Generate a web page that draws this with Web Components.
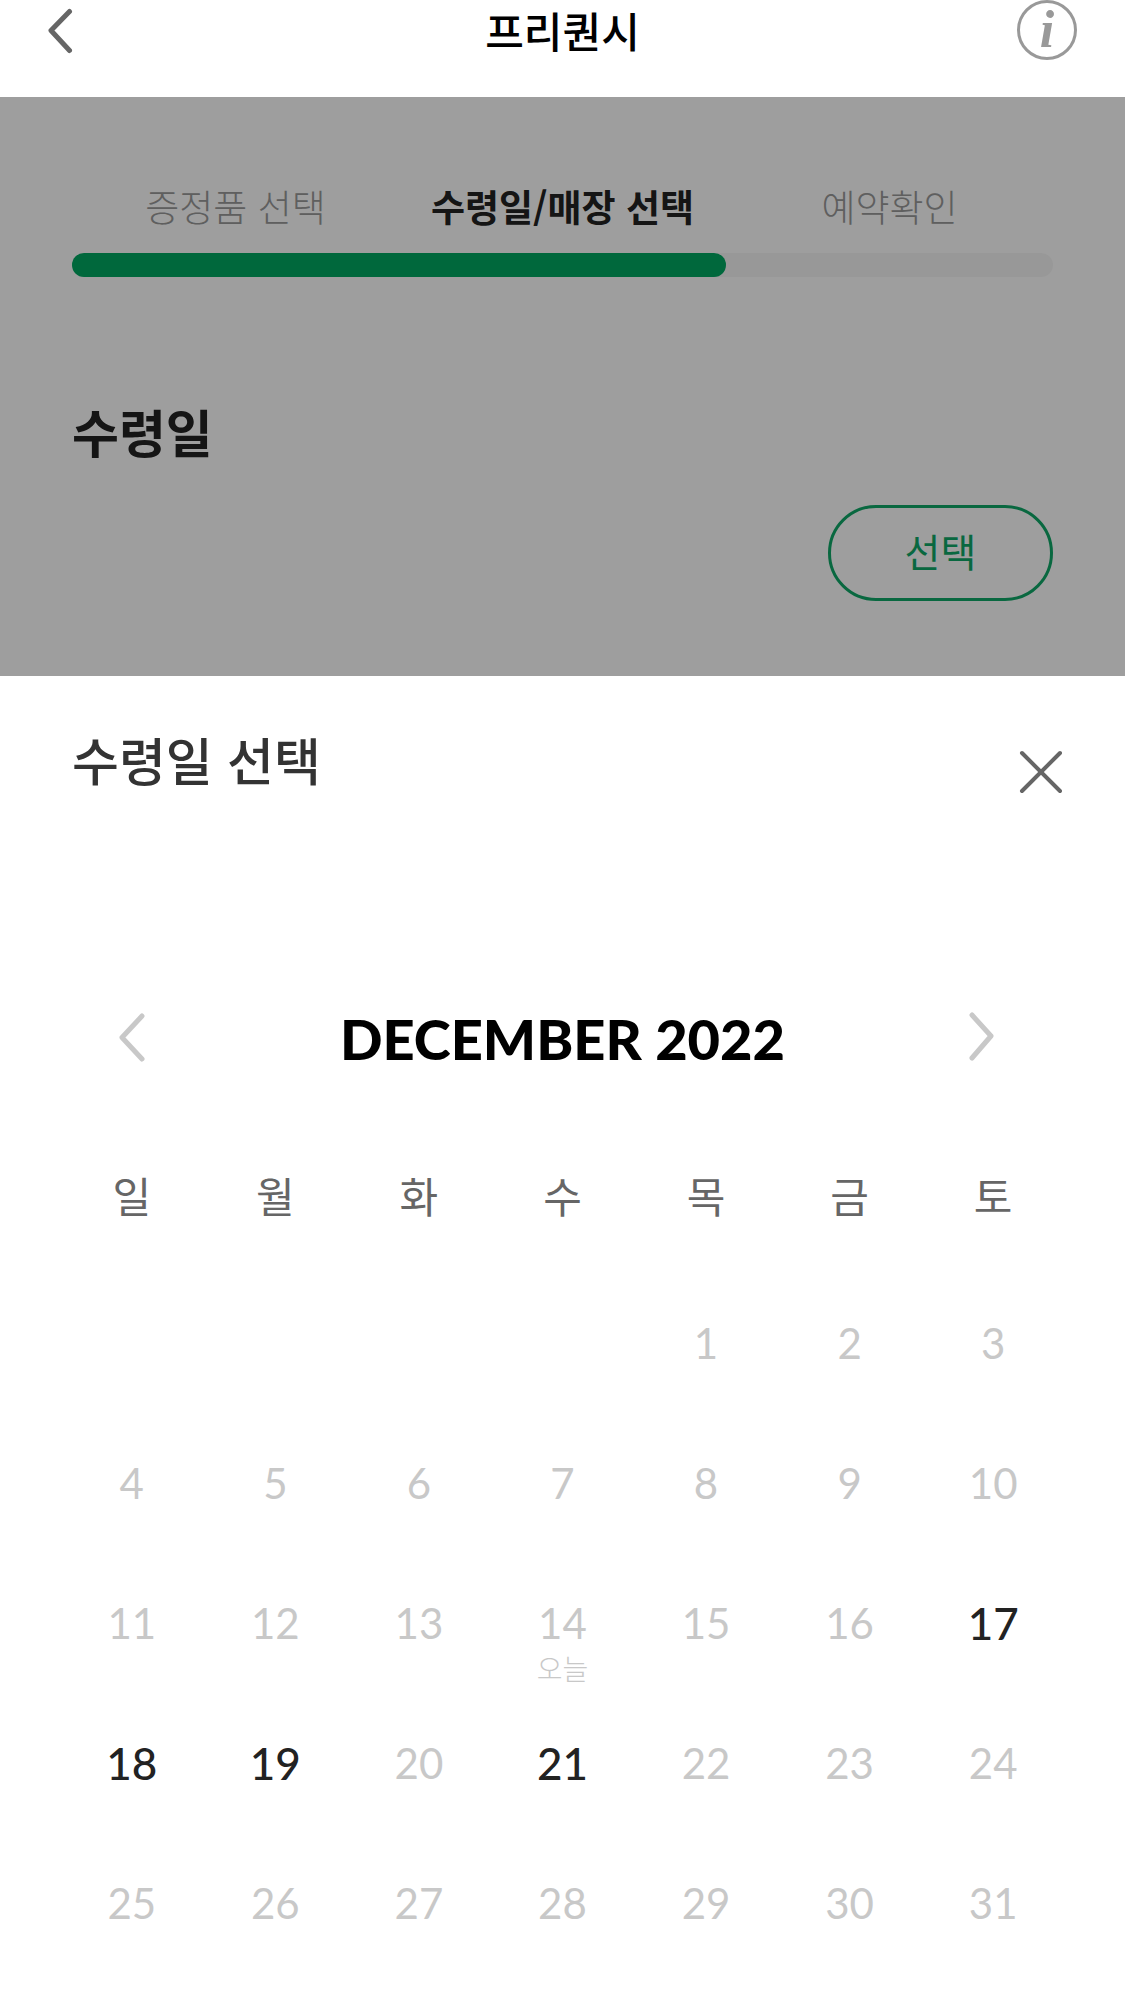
<!DOCTYPE html>
<html lang="ko">
<head>
<meta charset="utf-8">
<meta name="viewport" content="width=device-width, initial-scale=1">
<title>프리퀀시</title>
<style>
body {
    margin: 0;
    min-height: 100vh;
    background: #fff;
    color: #222;
    font-family: "Noto Sans CJK KR", sans-serif;
}
</style>
</head>
<body>
<app-header>프리퀀시</app-header>

<dimmed-page>
    <step-progress current="2" steps="증정품 선택,수령일/매장 선택,예약확인"></step-progress>
    <pickup-section action="선택">수령일</pickup-section>
</dimmed-page>

<bottom-sheet>
    <span slot="title">수령일 선택</span>
    <month-calendar year="2022" month="12" today="14" available="17,18,19,21"></month-calendar>
</bottom-sheet>

<script>
const buttonReset = /*css*/`
button {
    margin: 0;
    padding: 0;
    border: 0;
    background: none;
    color: inherit;
    font: inherit;
    cursor: pointer;
}

svg {
    display: block;
    fill: none;
    stroke: currentColor;
    stroke-linecap: round;
    stroke-linejoin: round;
}
`;

class AppHeader extends HTMLElement {
    constructor() {
        super();
        const shadow = this.attachShadow({ mode: "open" });
        shadow.innerHTML = /*html*/`
<style>
${buttonReset}
:host {
    display: block;
    background: #fff;
}

header {
    display: grid;
    grid-template-columns: 60px 1fr 60px;
    padding: 0 48px 37px;
}

h1 {
    margin: 0;
    color: #000;
    font-size: 42px;
    line-height: 60px;
    font-weight: 500;
    text-align: center;
}

.back {
    color: #666;
}

.info {
    box-sizing: border-box;
    height: 60px;
    border: 3px solid #999;
    border-radius: 50%;
    color: #999;
    font: italic bold 52px/54px "Liberation Serif", serif;
}
</style>
<header>
    <button class="back" type="button" aria-label="뒤로">
        <svg width="60" height="60" viewBox="0 0 60 60" stroke-width="5"><path d="M21.5 11.5 3 30.5 21.5 50.5"/></svg>
    </button>
    <h1><slot></slot></h1>
    <button class="info" type="button">i</button>
</header>
`;
    }
}

window.customElements.define("app-header", AppHeader);

class DimmedPage extends HTMLElement {
    constructor() {
        super();
        const shadow = this.attachShadow({ mode: "open" });
        shadow.innerHTML = /*html*/`
<style>
:host {
    display: block;
    position: relative;
    padding: 85px 72px 75px;
    background: #fff;
}

.backdrop {
    position: absolute;
    inset: 0;
    background: rgba(0, 0, 0, 0.38);
}
</style>
<slot></slot>
<div class="backdrop"></div>
`;
    }
}

window.customElements.define("dimmed-page", DimmedPage);

class StepProgress extends HTMLElement {
    constructor() {
        super();
        this.attachShadow({ mode: "open" });
    }

    connectedCallback() {
        const steps = this.getAttribute("steps").split(",");
        const current = parseInt(this.getAttribute("current") || 1, 10);
        const items = steps.map((step, i) => {
            const active = i + 1 === current;
            return `<li${active ? ' class="active" aria-current="step"' : ""}>${step}</li>`;
        });

        this.shadowRoot.innerHTML = /*html*/`
<style>
:host {
    display: block;
}

ol {
    display: grid;
    grid-template-columns: repeat(${steps.length}, 1fr);
    margin: 0 0 23px;
    padding: 0;
    list-style: none;
    color: #999;
    font-size: 37px;
    line-height: 48px;
    font-weight: 300;
    text-align: center;
    white-space: nowrap;
}

.active {
    color: #222;
    font-weight: 700;
}

.track {
    height: 24px;
    border-radius: 12px;
    background: #f6f6f6;
}

.fill {
    width: calc(100% * ${current} / ${steps.length});
    height: 100%;
    border-radius: 12px;
    background: #00a862;
}
</style>
<ol>${items.join("")}</ol>
<div class="track"><div class="fill"></div></div>
`;
    }
}

window.customElements.define("step-progress", StepProgress);

class PickupSection extends HTMLElement {
    constructor() {
        super();
        this.attachShadow({ mode: "open" });
    }

    connectedCallback() {
        this.shadowRoot.innerHTML = /*html*/`
<style>
${buttonReset}
:host {
    display: flex;
    flex-direction: column;
    gap: 38px;
    padding-top: 118px;
}

h2 {
    margin: 0;
    color: #222;
    font-size: 51px;
    line-height: 72px;
    font-weight: 700;
}

button {
    align-self: flex-end;
    box-sizing: border-box;
    min-width: 225px;
    height: 96px;
    padding-bottom: 6px;
    border: 3px solid #10a868;
    border-radius: 48px;
    color: #10a868;
    font-size: 39px;
}
</style>
<h2><slot></slot></h2>
<button type="button">${this.getAttribute("action")}</button>
`;
    }
}

window.customElements.define("pickup-section", PickupSection);

class BottomSheet extends HTMLElement {
    constructor() {
        super();
        const shadow = this.attachShadow({ mode: "open" });
        shadow.innerHTML = /*html*/`
<style>
${buttonReset}
:host {
    display: block;
    padding: 46px 60px 20px;
    background: #fff;
}

header {
    display: flex;
    justify-content: space-between;
    align-items: flex-end;
    padding-left: 12px;
    margin-bottom: 203px;
}

h2 {
    margin: 0;
    color: #333;
    font-size: 51px;
    line-height: 74px;
    font-weight: 500;
}

button {
    color: #666;
}
</style>
<header>
    <h2><slot name="title"></slot></h2>
    <button type="button" aria-label="닫기">
        <svg width="48" height="48" viewBox="0 0 48 48" stroke-width="4"><path d="M5 5 43 43M43 5 5 43"/></svg>
    </button>
</header>
<slot></slot>
`;
    }
}

window.customElements.define("bottom-sheet", BottomSheet);

class MonthCalendar extends HTMLElement {
    constructor() {
        super();
        this.attachShadow({ mode: "open" });
        this._weekdays = ["일", "월", "화", "수", "목", "금", "토"];
    }

    connectedCallback() {
        const year = parseInt(this.getAttribute("year"), 10);
        const month = parseInt(this.getAttribute("month"), 10);
        const name = new Date(year, month - 1, 1).toLocaleString("en-US", { month: "long" });

        this.shadowRoot.innerHTML = /*html*/`
<style>
${buttonReset}
:host {
    display: block;
}

nav {
    display: grid;
    grid-template-columns: repeat(7, 1fr);
    align-items: center;
    margin-bottom: 37px;
    color: #c8c8c8;
}

nav button {
    justify-self: center;
}

h3 {
    grid-column: span 5;
    margin: 0;
    color: #000;
    font: 900 56px/80px Lato, sans-serif;
    text-align: center;
}

table {
    width: 100%;
    table-layout: fixed;
    border-collapse: collapse;
}

th, td {
    padding: 0;
    text-align: center;
    vertical-align: top;
}

th {
    height: 156px;
    color: #666;
    font-size: 42px;
    font-weight: 400;
    vertical-align: middle;
}

td {
    height: 140px;
}

td button {
    width: 100%;
    padding-top: 46px;
    color: #222;
    font: 500 44px/50px Lato, sans-serif;
}

td button:disabled {
    color: #c8c8c8;
    font-size: 42px;
    font-weight: 400;
    cursor: default;
}

small {
    display: block;
    font: 300 28px/40px "Noto Sans CJK KR", sans-serif;
}
</style>
<nav>
    <button type="button" aria-label="이전 달">
        <svg width="40" height="60" viewBox="0 0 40 60" stroke-width="5"><path d="M30 7 10 28.5 30 50"/></svg>
    </button>
    <h3>${name.toUpperCase()} ${year}</h3>
    <button type="button" aria-label="다음 달">
        <svg width="48" height="60" viewBox="0 0 48 60" stroke-width="5"><path d="M3 6 22 27 3 49"/></svg>
    </button>
</nav>
<table>
    <thead><tr>${this._weekdays.map(d => `<th scope="col">${d}</th>`).join("")}</tr></thead>
    <tbody>${this.renderWeeks(year, month)}</tbody>
</table>
`;
    }

    renderWeeks(year, month) {
        const today = parseInt(this.getAttribute("today"), 10);
        const available = this.getAttribute("available").split(",").map(Number);
        const offset = new Date(year, month - 1, 1).getDay();
        const count = new Date(year, month, 0).getDate();

        let html = "";
        for (let start = 1 - offset; start <= count; start += 7) {
            html += "<tr>";
            for (let day = start; day < start + 7; day++) {
                if (day < 1 || day > count) {
                    html += "<td></td>";
                    continue;
                }
                const disabled = available.includes(day) ? "" : " disabled";
                const label = day === today ? "<small>오늘</small>" : "";
                html += `<td><button type="button"${disabled}>${day}${label}</button></td>`;
            }
            html += "</tr>";
        }
        return html;
    }
}

window.customElements.define("month-calendar", MonthCalendar);
</script>
</body>
</html>
